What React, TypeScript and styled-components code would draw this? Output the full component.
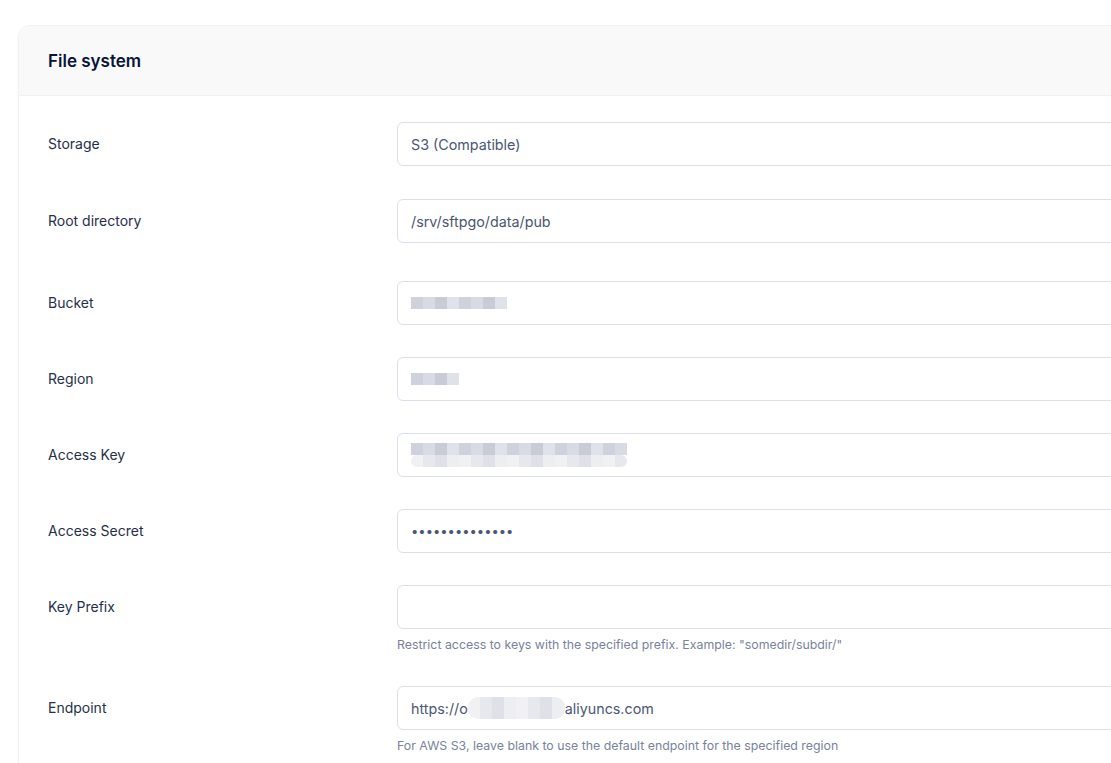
import React from "react";
import styled, { createGlobalStyle } from "styled-components";

const GlobalStyle = createGlobalStyle`
  html, body {
    margin: 0;
    padding: 0;
    background: #ffffff;
    overflow: hidden;
  }
  body {
    font-family: Inter, "Noto Sans", "Liberation Sans", sans-serif;
    color: #252f4a;
  }
`;

const Page = styled.div`
  padding: 25px 0 0 18px;
  width: 1180px;
`;

const Card = styled.section`
  border: 1px solid #f1f1f4;
  border-radius: 12px;
  background: #ffffff;
  box-shadow: 0 3px 4px rgba(0, 0, 0, 0.03);
`;

const CardHeader = styled.div`
  height: 69px;
  display: flex;
  align-items: center;
  padding: 0 29px;
  background: #f9f9f9;
  border-bottom: 1px solid #f1f1f4;
  border-radius: 12px 12px 0 0;
`;

const Title = styled.h3`
  margin: 0;
  font-size: 17px;
  font-weight: 600;
  color: #071437;
`;

const CardBody = styled.div`
  padding: 26px 29px 20px;
  display: flex;
  flex-direction: column;
`;

const Row = styled.div<{ $extra?: number }>`
  display: grid;
  grid-template-columns: 349px 1fr;
  align-items: start;
  margin-bottom: ${(p) => 32 + (p.$extra ?? 0)}px;
`;

const Label = styled.label`
  height: 44px;
  box-sizing: border-box;
  padding-bottom: 2px;
  display: flex;
  align-items: center;
  font-size: 14px;
  font-weight: 400;
  color: #252f4a;
`;

const Field = styled.div`
  display: flex;
  flex-direction: column;
`;

const InputBox = styled.div`
  position: relative;
  height: 44px;
  box-sizing: border-box;
  border: 1px solid #dbdfe9;
  border-radius: 6px;
  background: #ffffff;
  display: flex;
  align-items: center;
  padding: 0 13px;
  font-size: 14.3px;
  font-weight: 400;
  color: #4b5675;
  white-space: nowrap;
`;

const Dots = styled.span`
  font-size: 13px;
  color: #4b5675;
`;

const Hint = styled.div`
  margin-top: 7px;
  font-size: 12.35px;
  line-height: 18px;
  color: #78829d;
`;

const Redacted = styled.span<{ $w: number; $h: number; $soft?: boolean }>`
  display: inline-block;
  width: ${(p) => p.$w}px;
  height: ${(p) => p.$h}px;
  border-radius: ${(p) => (p.$soft ? "10px" : "0")};
  background: ${(p) =>
    p.$soft
      ? "repeating-linear-gradient(90deg, #f1f1f4 0 12px, #e7e8ee 12px 24px, #dfe0e8 24px 36px, #eceef2 36px 48px)"
      : "repeating-linear-gradient(90deg, #cfd2dc 0 12px, #d8dbe4 12px 24px, #c9ccd7 24px 36px, #e0e2ea 36px 48px)"};
`;

const RedactedStack = styled.span`
  display: inline-flex;
  flex-direction: column;
`;

type FieldRow = {
  label: string;
  content: React.ReactNode;
  hint?: string;
  extra?: number;
};

const rows: FieldRow[] = [
  { label: "Storage", content: "S3 (Compatible)", extra: 1 },
  { label: "Root directory", content: "/srv/sftpgo/data/pub", extra: 6 },
  { label: "Bucket", content: <Redacted $w={96} $h={12} /> },
  { label: "Region", content: <Redacted $w={48} $h={12} /> },
  {
    label: "Access Key",
    content: (
      <RedactedStack>
        <Redacted $w={216} $h={12} />
        <Redacted $w={216} $h={12} $soft />
      </RedactedStack>
    ),
  },
  { label: "Access Secret", content: <Dots>••••••••••••••</Dots> },
  {
    label: "Key Prefix",
    content: null,
    hint: 'Restrict access to keys with the specified prefix. Example: "somedir/subdir/"',
  },
  {
    label: "Endpoint",
    content: (
      <>
        https://o<Redacted $w={97} $h={22} $soft />aliyuncs.com
      </>
    ),
    hint: "For AWS S3, leave blank to use the default endpoint for the specified region",
  },
];

export default function App() {
  return (
    <Page>
      <GlobalStyle />
      <Card>
        <CardHeader>
          <Title>File system</Title>
        </CardHeader>
        <CardBody>
          {rows.map((row) => (
            <Row key={row.label} $extra={row.extra}>
              <Label>{row.label}</Label>
              <Field>
                <InputBox>{row.content}</InputBox>
                {row.hint && <Hint>{row.hint}</Hint>}
              </Field>
            </Row>
          ))}
        </CardBody>
      </Card>
    </Page>
  );
}
